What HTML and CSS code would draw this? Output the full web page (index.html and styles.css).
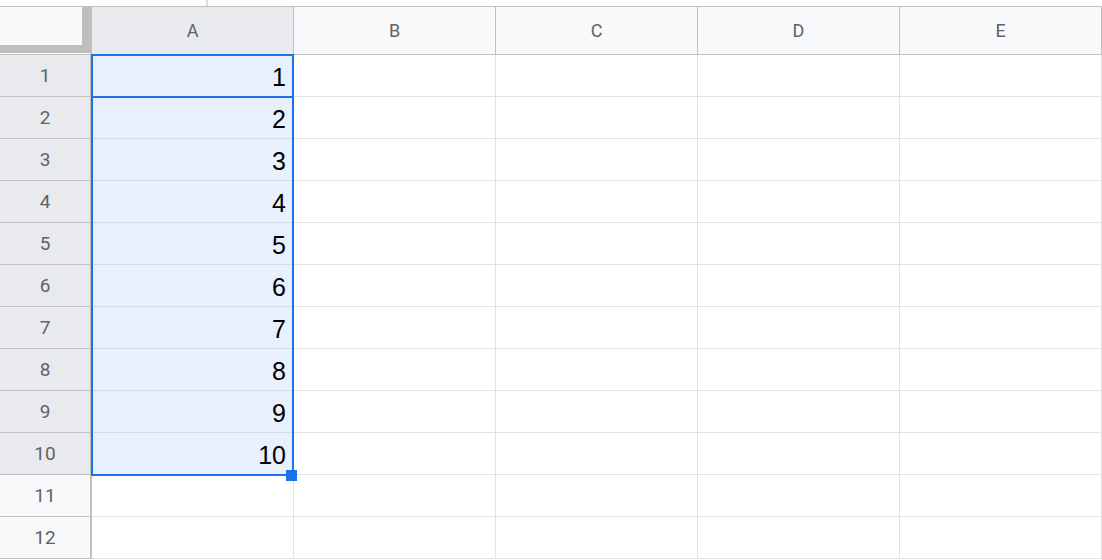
FILE: index.html
```html
<!DOCTYPE html>
<html>
<head>
<meta charset="utf-8">
<link rel="stylesheet" href="styles.css">
</head>
<body>
<div class="topstrip"><span class="tick"></span></div>
<div class="sheet">
  <div class="corner"><div class="corner-inner"></div></div>
  <div class="colhead sel">A</div>
  <div class="colhead">B</div>
  <div class="colhead">C</div>
  <div class="colhead">D</div>
  <div class="colhead">E</div>

  <div class="rowhead sel">1</div><div class="cell sel">1</div><div class="cell"></div><div class="cell"></div><div class="cell"></div><div class="cell"></div>
  <div class="rowhead sel">2</div><div class="cell sel">2</div><div class="cell"></div><div class="cell"></div><div class="cell"></div><div class="cell"></div>
  <div class="rowhead sel">3</div><div class="cell sel">3</div><div class="cell"></div><div class="cell"></div><div class="cell"></div><div class="cell"></div>
  <div class="rowhead sel">4</div><div class="cell sel">4</div><div class="cell"></div><div class="cell"></div><div class="cell"></div><div class="cell"></div>
  <div class="rowhead sel">5</div><div class="cell sel">5</div><div class="cell"></div><div class="cell"></div><div class="cell"></div><div class="cell"></div>
  <div class="rowhead sel">6</div><div class="cell sel">6</div><div class="cell"></div><div class="cell"></div><div class="cell"></div><div class="cell"></div>
  <div class="rowhead sel">7</div><div class="cell sel">7</div><div class="cell"></div><div class="cell"></div><div class="cell"></div><div class="cell"></div>
  <div class="rowhead sel">8</div><div class="cell sel">8</div><div class="cell"></div><div class="cell"></div><div class="cell"></div><div class="cell"></div>
  <div class="rowhead sel">9</div><div class="cell sel">9</div><div class="cell"></div><div class="cell"></div><div class="cell"></div><div class="cell"></div>
  <div class="rowhead sel">10</div><div class="cell sel">10</div><div class="cell"></div><div class="cell"></div><div class="cell"></div><div class="cell"></div>
  <div class="rowhead">11</div><div class="cell"></div><div class="cell"></div><div class="cell"></div><div class="cell"></div><div class="cell"></div>
  <div class="rowhead">12</div><div class="cell"></div><div class="cell"></div><div class="cell"></div><div class="cell"></div><div class="cell"></div>

  <div class="range"><span class="handle"></span></div>
  <div class="active"></div>
</div>
</body>
</html>
```

FILE: styles.css
```css
html, body {
  margin: 0;
  padding: 0;
  background: #ffffff;
  overflow: hidden;
}

.topstrip {
  height: 6px;
  display: flex;
}

.tick {
  display: block;
  width: 2px;
  height: 6px;
  margin-left: 206px;
  background: #dadce0;
}

.sheet {
  position: relative;
  display: grid;
  grid-template-columns: 92px repeat(5, 202px);
  grid-template-rows: 49px repeat(12, 42px);
}

.corner {
  grid-column: 1;
  grid-row: 1;
  box-sizing: border-box;
  border-top: 1px solid #c0c0c0;
  border-bottom: 1px solid #c0c0c0;
  border-right: 2px solid #c0c0c0;
  background: #f8f9fa;
  display: flex;
}

.corner-inner {
  box-sizing: border-box;
  width: 90px;
  height: 46px;
  border-right: 8px solid #bebebe;
  border-bottom: 8px solid #bebebe;
  background: #f8f9fa;
}

.colhead {
  box-sizing: border-box;
  border-top: 1px solid #c0c0c0;
  border-bottom: 1px solid #c0c0c0;
  border-right: 1px solid #c0c0c0;
  background: #f8f9fa;
  color: #5f6368;
  font-family: Roboto, "Liberation Sans", Arial, sans-serif;
  font-size: 18px;
  display: flex;
  align-items: center;
  justify-content: center;
}

.colhead.sel {
  background: #e8eaed;
}

.rowhead {
  grid-column: 1;
  box-sizing: border-box;
  border-right: 2px solid #c0c0c0;
  border-bottom: 1px solid #c0c0c0;
  background: #f8f9fa;
  color: #5f6368;
  font-family: Roboto, "Liberation Sans", Arial, sans-serif;
  font-size: 19px;
  display: flex;
  align-items: center;
  justify-content: center;
}

.rowhead.sel {
  background: #e8eaed;
}

.cell {
  box-sizing: border-box;
  border-right: 1px solid #e2e2e3;
  border-bottom: 1px solid #e2e2e3;
  font-family: "Liberation Sans", Arial, sans-serif;
  font-size: 25px;
  color: #000000;
  display: flex;
  align-items: center;
  justify-content: flex-end;
  padding: 3px 7px 0 0;
}

.cell.sel {
  background: #e8f0fe;
  border-bottom-color: #d6dce6;
}

.range {
  position: absolute;
  grid-column: 2 / 3;
  grid-row: 2 / 12;
  top: -1px;
  left: -1px;
  right: 0;
  bottom: -1px;
  box-sizing: border-box;
  border: 2px solid #1a73e8;
  pointer-events: none;
}

.active {
  position: absolute;
  grid-column: 2 / 3;
  grid-row: 2 / 3;
  top: -1px;
  left: -1px;
  right: 0;
  bottom: -1px;
  box-sizing: border-box;
  border: 2px solid #1a73e8;
  pointer-events: none;
}

.handle {
  position: absolute;
  right: -5px;
  bottom: -7px;
  width: 11px;
  height: 11px;
  background: #1a73e8;
}
```
